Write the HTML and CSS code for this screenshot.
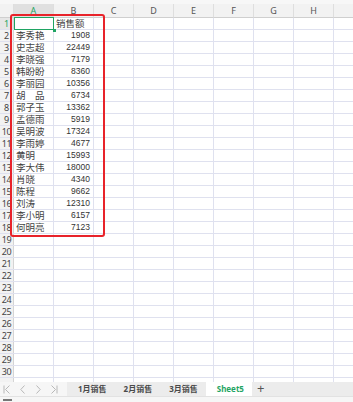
FILE: index.html
```html
<!DOCTYPE html>
<html lang="zh">
<head>
    <meta charset="UTF-8">
    <title>销售额</title>
    <link rel="stylesheet" href="styles.css">
</head>
<body>
    <div class="sheet">
        <div class="head">
            <span class="corner"></span>
            <span class="col sel">A</span>
            <span class="col">B</span>
            <span class="col">C</span>
            <span class="col">D</span>
            <span class="col">E</span>
            <span class="col">F</span>
            <span class="col">G</span>
            <span class="col">H</span>
            <span class="col"></span>
        </div>
        <div class="rows">
            <div class="row"><span class="rn sel">1</span><span class="name"></span><span class="name">销售额</span></div>
            <div class="row"><span class="rn">2</span><span class="name">李秀艳</span><span class="num">1908</span></div>
            <div class="row"><span class="rn">3</span><span class="name">史志超</span><span class="num">22449</span></div>
            <div class="row"><span class="rn">4</span><span class="name">李晓强</span><span class="num">7179</span></div>
            <div class="row"><span class="rn">5</span><span class="name">韩盼盼</span><span class="num">8360</span></div>
            <div class="row"><span class="rn">6</span><span class="name">李丽园</span><span class="num">10356</span></div>
            <div class="row"><span class="rn">7</span><span class="name">胡　品</span><span class="num">6734</span></div>
            <div class="row"><span class="rn">8</span><span class="name">郭子玉</span><span class="num">13362</span></div>
            <div class="row"><span class="rn">9</span><span class="name">孟德雨</span><span class="num">5919</span></div>
            <div class="row"><span class="rn">10</span><span class="name">吴明波</span><span class="num">17324</span></div>
            <div class="row"><span class="rn">11</span><span class="name">李雨婷</span><span class="num">4677</span></div>
            <div class="row"><span class="rn">12</span><span class="name">黄明</span><span class="num">15993</span></div>
            <div class="row"><span class="rn">13</span><span class="name">李大伟</span><span class="num">18000</span></div>
            <div class="row"><span class="rn">14</span><span class="name">肖晓</span><span class="num">4340</span></div>
            <div class="row"><span class="rn">15</span><span class="name">陈程</span><span class="num">9662</span></div>
            <div class="row"><span class="rn">16</span><span class="name">刘涛</span><span class="num">12310</span></div>
            <div class="row"><span class="rn">17</span><span class="name">李小明</span><span class="num">6157</span></div>
            <div class="row"><span class="rn">18</span><span class="name">何明亮</span><span class="num">7123</span></div>
            <div class="row"><span class="rn">19</span></div>
            <div class="row"><span class="rn">20</span></div>
            <div class="row"><span class="rn">21</span></div>
            <div class="row"><span class="rn">22</span></div>
            <div class="row"><span class="rn">23</span></div>
            <div class="row"><span class="rn">24</span></div>
            <div class="row"><span class="rn">25</span></div>
            <div class="row"><span class="rn">26</span></div>
            <div class="row"><span class="rn">27</span></div>
            <div class="row"><span class="rn">28</span></div>
            <div class="row"><span class="rn">29</span></div>
            <div class="row"><span class="rn">30</span></div>
            <div class="row"><span class="rn"></span></div>
        </div>
        <div class="cursor"></div>
        <div class="mark"></div>
    </div>

    <div class="tabs">
        <div class="nav">
            <svg width="8" height="9" viewBox="0 0 8 9"><path d="M1 0.5v8M6.5 0.5L2.5 4.5l4 4" fill="none" stroke="#b8b8b8" stroke-width="1"/></svg>
            <svg width="6" height="9" viewBox="0 0 6 9"><path d="M4.5 0.5L0.8 4.5l3.7 4" fill="none" stroke="#b8b8b8" stroke-width="1"/></svg>
            <svg width="6" height="9" viewBox="0 0 6 9"><path d="M1.5 0.5l3.7 4-3.7 4" fill="none" stroke="#b8b8b8" stroke-width="1"/></svg>
            <svg width="8" height="9" viewBox="0 0 8 9"><path d="M1.5 0.5l4 4-4 4M7 0.5v8" fill="none" stroke="#b8b8b8" stroke-width="1"/></svg>
        </div>
        <div class="tab">1月销售</div>
        <div class="tab">2月销售</div>
        <div class="tab">3月销售</div>
        <div class="tab active">Sheet5</div>
        <div class="add">+</div>
    </div>
    <div class="status"><span class="dot"></span></div>
</body>
</html>
```

FILE: styles.css
```css
body {
    margin: 0;
    font-family: "Noto Sans", "Noto Sans CJK SC", sans-serif;
    background: #fff;
    width: 353px;
    height: 402px;
    overflow: hidden;
}
.sheet {
    position: relative;
    height: 382px;
    overflow: hidden;
}
.head {
    display: grid;
    grid-template-columns: 14px repeat(9, 40px);
    height: 18px;
    box-sizing: border-box;
    padding-top: 4px;
    background: #f7f7f7;
}
.head span {
    background: #f2f2f2;
    border-right: 1px solid #dedede;
    border-bottom: 1px solid #cfcfcf;
    font-size: 9px;
    color: #555;
    text-align: center;
    line-height: 13px;
}
.head .sel {
    background: #e0e0e0;
    color: #1fa463;
}
.row {
    display: grid;
    grid-template-columns: 14px 40px 40px;
    height: 12px;
    box-sizing: border-box;
    border-bottom: 1px solid #dfe1ef;
    background: repeating-linear-gradient(to right, transparent 0 39px, #dfe1ef 39px 40px);
    background-position: 14px 0;
}
.rn {
    background: #f2f2f2;
    border-right: 1px solid #d4d4d4;
    font-size: 9px;
    line-height: 11px;
    color: #444;
    text-align: center;
    letter-spacing: -0.3px;
}
.rn.sel {
    color: #1fa463;
    background: #e6e6e6;
}
.name {
    font-size: 9.5px;
    line-height: 11px;
    color: #444;
    padding-left: 2px;
    white-space: nowrap;
}
.num {
    font-family: "Liberation Sans", sans-serif;
    font-size: 8.5px;
    line-height: 11px;
    color: #333;
    text-align: right;
    padding-right: 4px;
}
.cursor {
    position: absolute;
    left: 14px;
    top: 17px;
    width: 40px;
    height: 13px;
    box-sizing: border-box;
    border: 1.5px solid #1fa463;
}
.cursor::after {
    content: "";
    position: absolute;
    right: -3px;
    bottom: -3px;
    width: 3px;
    height: 3px;
    background: #1fa463;
}
.mark {
    position: absolute;
    left: 10px;
    top: 14px;
    width: 95px;
    height: 223px;
    box-sizing: border-box;
    border: 2px solid #e8232a;
    border-radius: 3px;
}
.tabs {
    display: flex;
    align-items: stretch;
    height: 14px;
    background: #ececec;
    font-size: 8px;
    color: #444;
}
.nav {
    display: flex;
    align-items: center;
    gap: 9px;
    width: 67px;
    box-sizing: border-box;
    padding-left: 3px;
    background: #f6f6f6;
}
.tab {
    padding: 0 8px 0 11px;
    line-height: 14px;
    font-weight: bold;
    color: #4a4a4a;
}
.tab + .tab {
    padding-left: 9px;
}
.tab.active {
    background: #fff;
    color: #1fa463;
    padding: 0 8px 0 11px;
}
.add {
    padding-left: 5px;
    font-size: 13px;
    line-height: 13px;
    color: #555;
}
.status {
    height: 6px;
    background: #f6f6f6;
    border-top: 1px solid #e2e2e2;
}
.dot {
    display: block;
    margin-left: 3px;
    width: 9px;
    height: 2px;
    background: #777;
    margin-top: 2px;
}
```
